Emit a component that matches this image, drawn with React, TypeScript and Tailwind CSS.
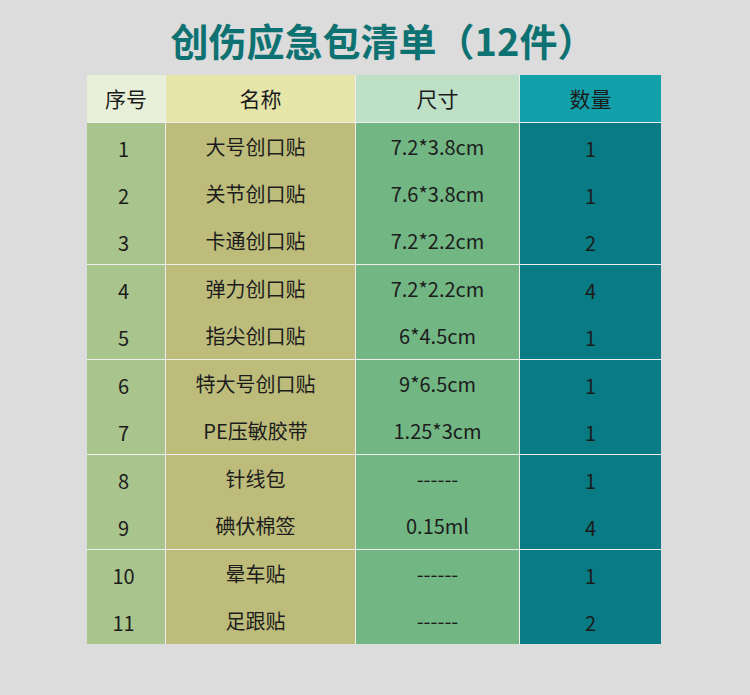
const groups = [
  [
    ['1', '大号创口贴', '7.2*3.8cm', '1'],
    ['2', '关节创口贴', '7.6*3.8cm', '1'],
    ['3', '卡通创口贴', '7.2*2.2cm', '2'],
  ],
  [
    ['4', '弹力创口贴', '7.2*2.2cm', '4'],
    ['5', '指尖创口贴', '6*4.5cm', '1'],
  ],
  [
    ['6', '特大号创口贴', '9*6.5cm', '1'],
    ['7', 'PE压敏胶带', '1.25*3cm', '1'],
  ],
  [
    ['8', '针线包', '------', '1'],
    ['9', '碘伏棉签', '0.15ml', '4'],
  ],
  [
    ['10', '晕车贴', '------', '1'],
    ['11', '足跟贴', '------', '2'],
  ],
];

const bodyBg = ['bg-[#a9c48c]', 'bg-[#bdbc7b]', 'bg-[#72b684]', 'bg-[#097b84]'];
const cellPad = ['pt-[4px] pr-[5px]', 'pr-[10px]', '', 'pt-[4px]'];

export default function App() {
  return (
    <div
      className="w-[750px] h-[695px] bg-[#dcdcdc] text-[#1c1c1c]"
      style={{ fontFamily: '"Noto Sans CJK SC", "Noto Sans", sans-serif' }}
    >
      <h1 className="h-[75px] flex items-center justify-center pt-[4px] pl-[16px] text-[38px] leading-none font-bold text-[#0f7272]">
        创伤应急包清单（12件）
      </h1>

      <div className="mx-[87px] w-[574px] grid grid-cols-[78px_189px_163px_141px] gap-px bg-[#eeeeee]">
        {/* header */}
        <div className="h-[47px] flex items-center justify-center bg-[#e8f0da] text-[21px]">序号</div>
        <div className="h-[47px] flex items-center justify-center bg-[#e6e5aa] text-[21px]">名称</div>
        <div className="h-[47px] flex items-center justify-center bg-[#bde0c6] text-[21px]">尺寸</div>
        <div className="h-[47px] flex items-center justify-center bg-[#12a0aa] text-[21px]">数量</div>

        {groups.map((rows, gi) =>
          [0, 1, 2, 3].map((ci) => (
            <div key={`${gi}-${ci}`} className={`flex flex-col ${bodyBg[ci]}`}>
              {rows.map((r) => (
                <div
                  key={r[0]}
                  className={`h-[47px] flex items-center justify-center text-[20px] ${cellPad[ci]}`}
                >
                  {r[ci]}
                </div>
              ))}
            </div>
          ))
        )}
      </div>
    </div>
  );
}
